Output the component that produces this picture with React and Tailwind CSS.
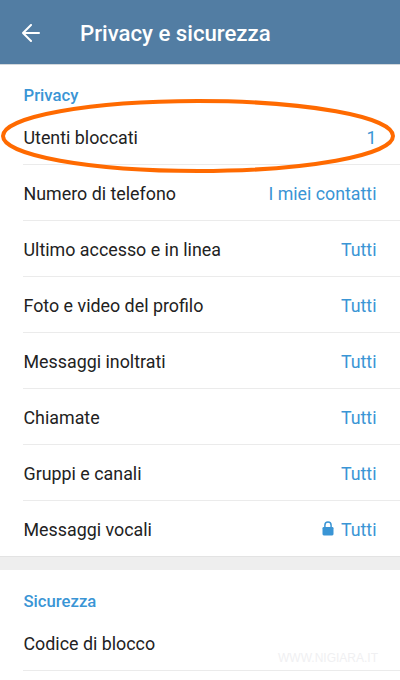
import React from "react";

const privacyRows = [
  { label: "Utenti bloccati", value: "1" },
  { label: "Numero di telefono", value: "I miei contatti" },
  { label: "Ultimo accesso e in linea", value: "Tutti" },
  { label: "Foto e video del profilo", value: "Tutti" },
  { label: "Messaggi inoltrati", value: "Tutti" },
  { label: "Chiamate", value: "Tutti" },
  { label: "Gruppi e canali", value: "Tutti" },
  { label: "Messaggi vocali", value: "Tutti", locked: true },
];

const LockIcon = () => (
  <svg width="12" height="15" viewBox="0 0 12 15" className="mr-[7px] mb-[3px]" fill="none">
    <path d="M2.9 7V4.2a3.1 3.1 0 0 1 6.2 0V7" stroke="#3a95d5" strokeWidth="1.5" />
    <rect x="0.5" y="6" width="11" height="8.4" rx="1.3" fill="#3a95d5" />
  </svg>
);

const Row = ({ label, value, locked, last }) => (
  <div className={`ml-[23px] h-14 pl-[0.5px] pr-[23.5px] pt-0.5 flex items-center justify-between border-b ${last ? "border-transparent" : "border-[#ebebeb]"}`}>
    <span className="text-[17.85px] leading-6 text-[#222222]">{label}</span>
    <span className="flex items-center text-[17.8px] leading-6 text-[#3a95d5]">
      {locked && <LockIcon />}
      {value}
    </span>
  </div>
);

const SectionTitle = ({ children }) => (
  <h2 className="pl-[23.5px] pt-[19px] pb-px text-[16.7px] leading-6 font-medium text-[#3a95d5]">{children}</h2>
);

const App = () => (
  <div className="relative w-[400px] h-[680px] bg-white overflow-hidden font-['Roboto',sans-serif]">
    <header className="h-[65px] pl-[22px] flex items-center bg-[#527da3] border-b border-[#d3d8dc]">
      <svg width="18" height="18" viewBox="0 0 18 18" fill="none" stroke="#ffffff" strokeWidth="2" strokeLinecap="round" strokeLinejoin="round" className="mt-0.5">
        <path d="M17 9H1M9 1L1 9l8 8" />
      </svg>
      <h1 className="ml-10 pt-px text-[22.2px] leading-7 font-medium text-white">Privacy e sicurezza</h1>
    </header>

    <section>
      <SectionTitle>Privacy</SectionTitle>
      {privacyRows.map((row, i) => (
        <Row key={row.label} {...row} last={i === privacyRows.length - 1} />
      ))}
    </section>

    <div className="-mt-px h-[14px] bg-[#eeeeee] border-t border-[#e3e3e3]"></div>

    <section className="pt-px">
      <SectionTitle>Sicurezza</SectionTitle>
      <Row label="Codice di blocco" />
    </section>

    {/* Highlight around the blocked users row */}
    <svg className="absolute left-0 top-[95px]" width="400" height="82" viewBox="0 0 400 82" fill="none">
      <ellipse cx="198" cy="41" rx="195" ry="35" stroke="#ff6a00" strokeWidth="4" />
    </svg>
    <span className="absolute left-[278px] top-[650px] text-[12px] leading-4 text-[#f0f0f2] font-['Liberation_Sans',sans-serif]">
      WWW.NIGIARA.IT
    </span>
  </div>
);

export default App;
